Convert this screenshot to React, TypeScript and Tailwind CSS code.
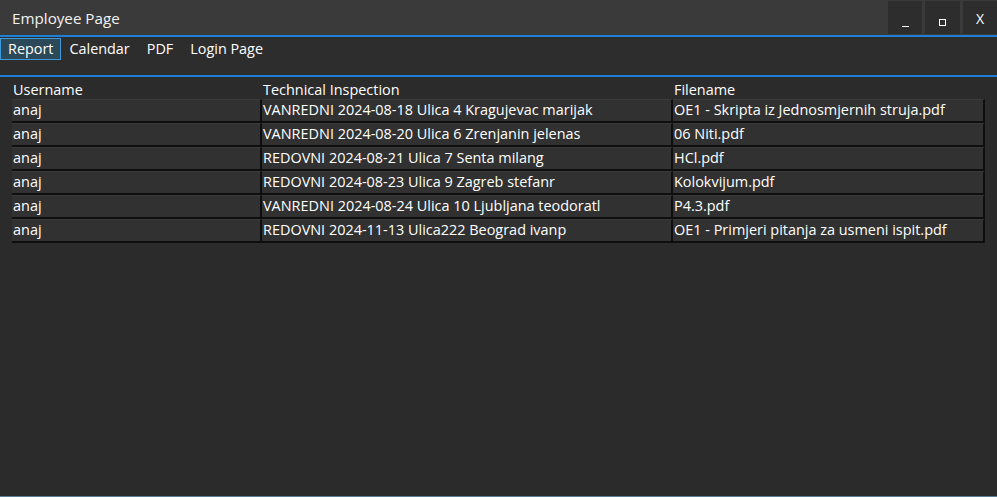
import React from "react";

const rows = [
  ["anaj", "VANREDNI 2024-08-18 Ulica 4 Kragujevac marijak", "OE1 - Skripta iz Jednosmjernih struja.pdf"],
  ["anaj", "VANREDNI 2024-08-20 Ulica 6 Zrenjanin jelenas", "06 Niti.pdf"],
  ["anaj", "REDOVNI 2024-08-21 Ulica 7 Senta milang", "HCl.pdf"],
  ["anaj", "REDOVNI 2024-08-23 Ulica 9 Zagreb stefanr", "Kolokvijum.pdf"],
  ["anaj", "VANREDNI 2024-08-24 Ulica 10 Ljubljana teodoratl", "P4.3.pdf"],
  ["anaj", "REDOVNI 2024-11-13 Ulica222 Beograd ivanp", "OE1 - Primjeri pitanja za usmeni ispit.pdf"],
];

const font = { fontFamily: '"Open Sans", "Noto Sans", sans-serif' };

export default function App() {
  return (
    <div
      className="w-[997px] h-[497px] bg-[#2b2b2b] text-white flex flex-col overflow-hidden"
      style={font}
    >
      {/* title bar */}
      <div className="h-[35px] bg-[#3a3a3a] flex items-start">
        <div className="flex-1 pl-[12px] pt-[8px] text-[15.2px] leading-[20px] text-[#f2f2f2]">Employee Page</div>
        <div className="flex gap-[3px] pt-[1px]">
          <div className="w-[34px] h-[33px] bg-[#2d2d2d] flex items-end justify-center pb-[7px]">
            <div className="w-[7px] h-[1px] bg-white" />
          </div>
          <div className="w-[35px] h-[33px] bg-[#2d2d2d] flex items-center justify-center pt-[10px]">
            <div className="w-[7px] h-[7px] border border-white" />
          </div>
          <div className="w-[34px] h-[33px] bg-[#2d2d2d] flex items-center justify-center pt-[3px] text-[14px] leading-[14px]">
            X
          </div>
        </div>
      </div>
      <div className="h-[2px] bg-[#1d7fd6]" />
      {/* menu */}
      <div className="h-[38px] bg-[#2d2d2d] flex items-start pt-[1px] text-[14.4px]">
        <div className="h-[22px] px-[7px] border border-[#3d9bdc] bg-[#2b4959] leading-[20px]">Report</div>
        <div className="h-[22px] px-[8px] leading-[22px]">Calendar</div>
        <div className="h-[22px] px-[9px] leading-[22px]">PDF</div>
        <div className="h-[22px] px-[8px] leading-[22px]">Login Page</div>
      </div>
      <div className="h-[2px] bg-[#1d7fd6]" />
      {/* table */}
      <div className="pl-[12px] pt-[4px] text-[14.45px]">
        <div className="flex h-[18px] leading-[18px]">
          <div className="w-[250px] pl-[1px]">Username</div>
          <div className="w-[411px] pl-[1px]">Technical Inspection</div>
          <div className="w-[312px] pl-[1px]">Filename</div>
        </div>
        {rows.map((r, i) => (
          <div key={i} className="flex h-[24px]">
            {r.map((c, j) => (
              <div
                key={j}
                className={
                  (j === 0 ? "w-[250px]" : j === 1 ? "w-[411px]" : "w-[312px]") +
                  " bg-[#313131] border-t border-t-[#3a3a3a] border-r-2 border-r-[#0e0e0e] border-b-2 border-b-[#0e0e0e] pl-[1px] leading-[20px] whitespace-nowrap overflow-hidden"
                }
              >
                {c}
              </div>
            ))}
          </div>
        ))}
      </div>
      <div className="flex-1" />
      <div className="h-[1px] bg-[#5c7f98]" />
    </div>
  );
}
